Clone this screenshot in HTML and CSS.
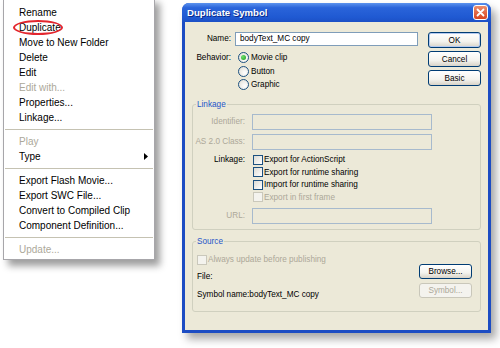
FILE: index.html
```html
<!DOCTYPE html>
<html lang="en">
<head>
    <meta charset="UTF-8">
    <meta name="viewport" content="width=device-width, initial-scale=1.0">
    <title>Duplicate Symbol</title>
    <link rel="stylesheet" href="styles.css">
</head>
<body>
    <div class="desk">
        <ul class="menu">
            <li>Rename</li>
            <li>Duplicate<span class="mark"></span></li>
            <li>Move to New Folder</li>
            <li>Delete</li>
            <li>Edit</li>
            <li class="off">Edit with...</li>
            <li>Properties...</li>
            <li>Linkage...</li>
            <li class="sep"></li>
            <li class="off">Play</li>
            <li>Type
                <svg class="arrow" width="4" height="7" viewBox="0 0 4 7"><polygon points="0,0 4,3.5 0,7" fill="#000"/></svg>
            </li>
            <li class="sep"></li>
            <li>Export Flash Movie...</li>
            <li>Export SWC File...</li>
            <li>Convert to Compiled Clip</li>
            <li>Component Definition...</li>
            <li class="sep"></li>
            <li class="off">Update...</li>
        </ul>

        <div class="dialog">
            <div class="titlebar">
                <span>Duplicate Symbol</span>
                <span class="close">
                    <svg width="9" height="9" viewBox="0 0 9 9"><path d="M1.5 1.5 L7.5 7.5 M7.5 1.5 L1.5 7.5" stroke="#fff" stroke-width="1.8" stroke-linecap="round"/></svg>
                </span>
            </div>
            <div class="client">
                <div class="top">
                    <div class="fields">
                        <span class="lbl">Name:</span>
                        <div class="text">bodyText_MC copy</div>
                        <span class="lbl behavior">Behavior:</span>
                        <div class="radios">
                            <div class="radio"><span class="dot on"></span>Movie clip</div>
                            <div class="radio"><span class="dot"></span>Button</div>
                            <div class="radio"><span class="dot"></span>Graphic</div>
                        </div>
                    </div>
                    <div class="buttons">
                        <div class="btn default">OK</div>
                        <div class="btn">Cancel</div>
                        <div class="btn basic">Basic</div>
                    </div>
                </div>

                <div class="group">
                    <span class="legend">Linkage</span>
                    <div class="linkage-grid">
                        <span class="lbl tall dim">Identifier:</span>
                        <div class="field"></div>
                        <span class="lbl tall dim">AS 2.0 Class:</span>
                        <div class="field"></div>
                        <span class="lbl short">Linkage:</span>
                        <div class="checks">
                            <div class="check"><span class="box"></span>Export for ActionScript</div>
                            <div class="check"><span class="box"></span>Export for runtime sharing</div>
                            <div class="check"><span class="box"></span>Import for runtime sharing</div>
                            <div class="check dim"><span class="box off"></span>Export in first frame</div>
                        </div>
                        <span class="lbl tall dim">URL:</span>
                        <div class="field"></div>
                    </div>
                </div>

                <div class="group source">
                    <span class="legend">Source</span>
                    <div class="source-body">
                        <div class="source-info">
                            <div class="check dim"><span class="box off"></span>Always update before publishing</div>
                            <div class="row">File:</div>
                            <div class="row">Symbol name:bodyText_MC copy</div>
                        </div>
                        <div class="source-btns">
                            <div class="btn">Browse...</div>
                            <div class="btn off">Symbol...</div>
                        </div>
                    </div>
                </div>
            </div>
        </div>
    </div>
</body>
</html>
```

FILE: styles.css
```css
*{
    box-sizing: border-box;
}
body{
    margin: 0;
    background: #fff;
    font-family: "Liberation Sans", Arial, sans-serif;
}
.desk{
    position: relative;
    width: 500px;
    height: 348px;
    overflow: hidden;
}

/* context menu */
.menu{
    position: absolute;
    left: 3px;
    top: -3px;
    width: 152px;
    margin: 0;
    padding: 7px 0 2px;
    list-style: none;
    background: #fff;
    border: 1px solid #A7A6AA;
    box-shadow: 5px 6px 7px rgba(0, 0, 0, 0.38);
    font-size: 10px;
    color: #000;
}
.menu li{
    position: relative;
    display: flex;
    justify-content: space-between;
    align-items: center;
    height: 15px;
    padding: 0 6px 0 15px;
}
.menu .off{
    color: #ACA899;
}
.menu .sep{
    height: auto;
    margin: 4px 1px 3px;
    padding: 0;
    border-top: 1px solid #C5C2B2;
    border-bottom: 1px solid #fff;
}
.mark{
    position: absolute;
    left: 9px;
    top: 0;
    width: 50px;
    height: 15px;
    border: 2px solid #E3262E;
    border-radius: 50%;
}

/* dialog */
.dialog{
    position: absolute;
    left: 182px;
    top: 3px;
    width: 309px;
    height: 330px;
    padding: 0 3px 3px;
    background: #1C4CC3;
    border-radius: 7px 7px 0 0;
    box-shadow: 5px 6px 8px rgba(0, 0, 0, 0.35);
    display: flex;
    flex-direction: column;
}
.titlebar{
    display: flex;
    align-items: center;
    justify-content: space-between;
    height: 19px;
    margin: 0 -3px;
    padding: 0 3px 0 5px;
    border-radius: 7px 7px 0 0;
    background: linear-gradient(#5C93EE, #2A64DA 25%, #1F59D2 75%, #1C50C6);
    color: #fff;
    font-weight: bold;
    font-size: 9.6px;
    text-shadow: 1px 1px 0 #0A2A8A;
}
.close{
    display: flex;
    align-items: center;
    justify-content: center;
    width: 15px;
    height: 15px;
    border: 1px solid #fff;
    border-radius: 3px;
    background: linear-gradient(#EC8D6C, #D9441F);
}
.client{
    flex: 1;
    background: #ECE9D8;
    padding-top: 10px;
    font-size: 8.2px;
    color: #000;
}

.top{
    display: flex;
}
.fields{
    display: grid;
    grid-template-columns: 46px 183px;
    column-gap: 4px;
    row-gap: 5px;
    align-items: start;
}
.lbl{
    text-align: right;
    line-height: 14px;
}
.behavior{
    line-height: 13.5px;
}
.text{
    height: 14px;
    padding-left: 4px;
    border: 1px solid #7F9DB9;
    background: #fff;
    line-height: 12px;
}
.radios{
    display: flex;
    flex-direction: column;
    padding-left: 3px;
}
.radio{
    display: flex;
    align-items: center;
    gap: 2px;
    height: 13.5px;
}
.dot{
    display: flex;
    align-items: center;
    justify-content: center;
    width: 11px;
    height: 11px;
    border: 1px solid #1C5180;
    border-radius: 50%;
    background: radial-gradient(circle at 65% 65%, #fff, #DEDCD2);
}
.dot.on::after{
    content: "";
    width: 5px;
    height: 5px;
    border-radius: 50%;
    background: radial-gradient(circle at 35% 35%, #6EE06E, #1E9A1E);
}

.buttons{
    display: flex;
    flex-direction: column;
    width: 53px;
    margin-left: 10px;
}
.btn{
    display: flex;
    align-items: center;
    justify-content: center;
    height: 16px;
    border: 1px solid #003C74;
    border-radius: 3px;
    background: linear-gradient(#fff, #F4F3EE 60%, #D8D3C8);
}
.buttons .btn + .btn{
    margin-top: 3px;
}
.buttons .basic{
    margin-top: 17px;
}
.btn.default{
    box-shadow: inset 0 0 0 1px #B4CAF0;
}
.btn.off{
    border-color: #C9C7BA;
    color: #ACA899;
    background: #F4F3EE;
}

/* group boxes */
.group{
    margin: 12px 7px 0;
    border: 1px solid #D0D0BF;
    border-radius: 3px;
}
.group.source{
    margin-top: 11px;
}
.legend{
    display: block;
    width: max-content;
    margin: -6px 0 0 3px;
    padding: 0 1px;
    line-height: 11px;
    background: #ECE9D8;
    color: #1F55C8;
}
.dim{
    color: #ACA899;
}
.linkage-grid{
    display: grid;
    grid-template-columns: 52px 180px;
    grid-template-rows: 16px 16px 50px 16px;
    column-gap: 7px;
    row-gap: 4px;
    margin-top: 4px;
    padding-bottom: 5px;
}
.lbl.tall{
    line-height: 16px;
}
.lbl.short{
    line-height: 12.5px;
}
.field{
    border: 1px solid #A7BACD;
    background: #ECE9D8;
}
.checks{
    display: flex;
    flex-direction: column;
    padding-left: 1px;
}
.check{
    display: flex;
    align-items: center;
    gap: 1px;
    height: 12.5px;
}
.box{
    width: 10px;
    height: 10px;
    border: 1px solid #1C5180;
    background: linear-gradient(135deg, #DCDBD4, #fff);
}
.box.off{
    border-color: #CAC8BB;
    background: #F4F3EE;
}

.source-body{
    display: flex;
    justify-content: space-between;
    padding: 0 8px 10px 4px;
}
.source-info{
    display: flex;
    flex-direction: column;
    gap: 5.5px;
    padding-top: 7px;
}
.source-info .check,
.source-info .row{
    height: 12px;
    line-height: 12px;
}
.source-btns{
    display: flex;
    flex-direction: column;
    gap: 4px;
    width: 53px;
    margin-top: 17px;
}
.source-btns .btn{
    height: 15px;
}
```
